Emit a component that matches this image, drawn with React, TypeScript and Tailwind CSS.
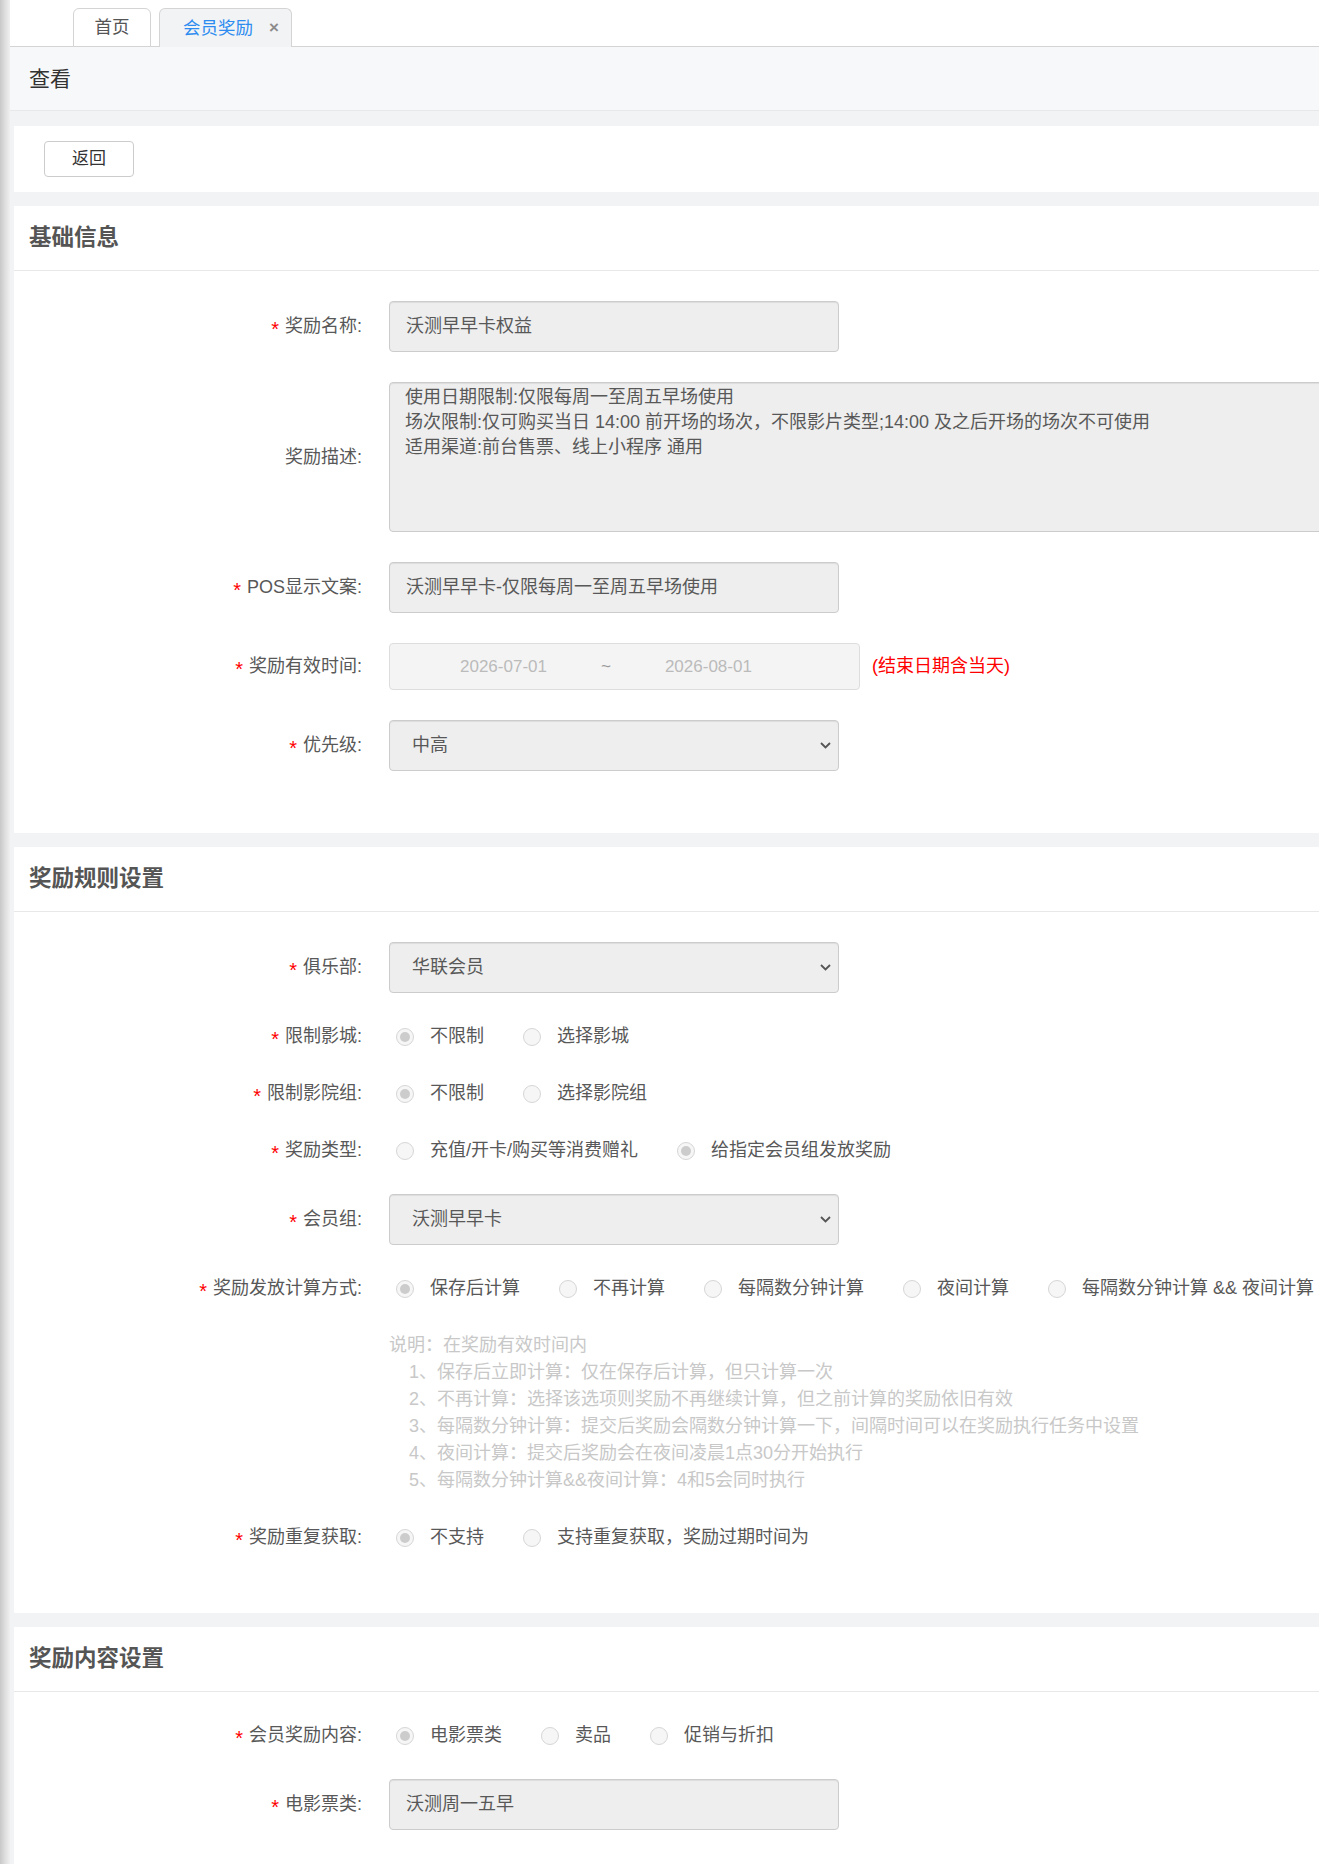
import type { ReactNode } from "react";

const calcModes = ["保存后计算", "不再计算", "每隔数分钟计算", "夜间计算", "每隔数分钟计算 && 夜间计算"];

const calcNotes = [
  "1、保存后立即计算：仅在保存后计算，但只计算一次",
  "2、不再计算：选择该选项则奖励不再继续计算，但之前计算的奖励依旧有效",
  "3、每隔数分钟计算：提交后奖励会隔数分钟计算一下，间隔时间可以在奖励执行任务中设置",
  "4、夜间计算：提交后奖励会在夜间凌晨1点30分开始执行",
  "5、每隔数分钟计算&&夜间计算：4和5会同时执行",
];

function Field({ label, required, children }: { label: string; required?: boolean; children: ReactNode }) {
  return (
    <div className="mb-[30px] flex items-center">
      <div className="w-[348px] shrink-0 text-right">
        {required && <span className="mr-[6px] inline-block translate-y-[4px] text-[20px] leading-none text-[#ff0000]">*</span>}
        {label}:
      </div>
      <div className="ml-[27px] flex items-center">{children}</div>
    </div>
  );
}

function TextBox({ value }: { value: string }) {
  return (
    <div className="flex h-[51px] w-[450px] items-center rounded-[4px] border border-[#cccccc] bg-[#eeeeee] px-[16px] shadow-[inset_0_1px_1px_rgba(0,0,0,0.075)]">
      {value}
    </div>
  );
}

function SelectBox({ value }: { value: string }) {
  return (
    <div className="flex h-[51px] w-[450px] items-center justify-between rounded-[4px] border border-[#cccccc] bg-[#eeeeee] pl-[22px] pr-[7px] shadow-[inset_0_1px_1px_rgba(0,0,0,0.075)]">
      <span>{value}</span>
      <svg width="11" height="7" viewBox="0 0 11 7" fill="none">
        <path d="M1 1l4.5 4.5L10 1" stroke="#555" strokeWidth="1.8" />
      </svg>
    </div>
  );
}

function Radio({ label, checked }: { label: string; checked?: boolean }) {
  return (
    <span className="mr-[39px] flex items-center">
      <span className="flex h-[18px] w-[18px] items-center justify-center rounded-full border border-[#d6d6d6] bg-[#f6f6f6]">
        {checked && <span className="h-[10px] w-[10px] rounded-full bg-[#cccccc]" />}
      </span>
      <span className="ml-[16px] whitespace-nowrap">{label}</span>
    </span>
  );
}

function RadioRow({ label, options, checked }: { label: string; options: string[]; checked: number }) {
  return (
    <Field label={label} required>
      <div className="ml-[7px] flex h-[27px] items-center">
        {options.map((o, i) => (
          <Radio key={o} label={o} checked={i === checked} />
        ))}
      </div>
    </Field>
  );
}

function Section({ title, children }: { title: string; children: ReactNode }) {
  return (
    <section className="mt-[14px] bg-white">
      <div className="flex h-[65px] items-center border-b border-[#e8e8e8] pl-[15px] text-[22.5px] font-bold text-[#555]">
        {title}
      </div>
      <div className="pt-[30px] pb-[32px]">{children}</div>
    </section>
  );
}

export default function App() {
  return (
    <div className="flex min-h-screen overflow-hidden bg-[#f2f3f5] font-['Liberation_Sans','Noto_Sans_CJK_SC',sans-serif] text-[18px] text-[#585858]">
      <div className="w-[10px] shrink-0 bg-gradient-to-r from-[#c8c8c8] via-[#dedede] to-[#f0f0f0]" />
      <div className="min-w-0 flex-1 pl-[4px]">
        {/* tabs */}
        <div className="ml-[-4px] flex h-[47px] items-end gap-[8px] border-b border-[#d4d4d4] bg-white pl-[63px] text-[17.5px]">
          <div className="mb-[-1px] flex h-[39px] w-[78px] items-center justify-center rounded-t-[6px] border border-[#d4d4d4] bg-white text-[#555]">
            首页
          </div>
          <div className="mb-[-1px] flex h-[39px] w-[133px] items-center rounded-t-[6px] border border-b-0 border-[#d4d4d4] bg-[#f2f3f5] pl-[23px] text-[#2d8cf0]">
            会员奖励
            <span className="ml-[16px] text-[17px] font-bold text-[#8c8c8c]">×</span>
          </div>
        </div>

        <div className="ml-[-4px] flex h-[64px] items-center border-b border-[#e8e8e8] bg-[#f7f8f9] pl-[19px] text-[21px] text-[#333]">
          查看
        </div>

        <div className="mt-[15px] flex h-[66px] items-center bg-white pl-[30px]">
          <button className="h-[36px] w-[90px] rounded-[4px] border border-[#cccccc] bg-white text-[17px] text-[#333]">
            返回
          </button>
        </div>

        <Section title="基础信息">
          <Field label="奖励名称" required>
            <TextBox value="沃测早早卡权益" />
          </Field>
          <Field label="奖励描述">
            <div className="h-[150px] w-[960px] rounded-[4px] border border-[#cccccc] bg-[#eeeeee] px-[15px] pt-[2px] leading-[25px] shadow-[inset_0_1px_1px_rgba(0,0,0,0.075)]">
              <div>使用日期限制:仅限每周一至周五早场使用</div>
              <div>场次限制:仅可购买当日 14:00 前开场的场次，不限影片类型;14:00 及之后开场的场次不可使用</div>
              <div>适用渠道:前台售票、线上小程序 通用</div>
            </div>
          </Field>
          <Field label="POS显示文案" required>
            <TextBox value="沃测早早卡-仅限每周一至周五早场使用" />
          </Field>
          <Field label="奖励有效时间" required>
            <div className="flex h-[47px] w-[471px] items-center gap-[54px] rounded-[4px] border border-[#dddddd] bg-[#f4f4f4] pl-[70px] text-[17px] text-[#bbbbbb]">
              <span>2026-07-01</span>
              <span className="text-[#999]">~</span>
              <span>2026-08-01</span>
            </div>
            <span className="ml-[12px] text-[#ff0000]">(结束日期含当天)</span>
          </Field>
          <Field label="优先级" required>
            <SelectBox value="中高" />
          </Field>
        </Section>

        <Section title="奖励规则设置">
          <Field label="俱乐部" required>
            <SelectBox value="华联会员" />
          </Field>
          <RadioRow label="限制影城" options={["不限制", "选择影城"]} checked={0} />
          <RadioRow label="限制影院组" options={["不限制", "选择影院组"]} checked={0} />
          <RadioRow label="奖励类型" options={["充值/开卡/购买等消费赠礼", "给指定会员组发放奖励"]} checked={1} />
          <Field label="会员组" required>
            <SelectBox value="沃测早早卡" />
          </Field>
          <RadioRow label="奖励发放计算方式" options={calcModes} checked={0} />
          <div className="mb-[30px] pl-[375px] leading-[27px] text-[#c8c8c8]">
            <div>说明：在奖励有效时间内</div>
            {calcNotes.map((n) => (
              <div key={n} className="pl-[20px]">
                {n}
              </div>
            ))}
          </div>
          <RadioRow label="奖励重复获取" options={["不支持", "支持重复获取，奖励过期时间为"]} checked={0} />
        </Section>

        <Section title="奖励内容设置">
          <RadioRow label="会员奖励内容" options={["电影票类", "卖品", "促销与折扣"]} checked={0} />
          <Field label="电影票类" required>
            <TextBox value="沃测周一五早" />
          </Field>
        </Section>
      </div>
    </div>
  );
}
